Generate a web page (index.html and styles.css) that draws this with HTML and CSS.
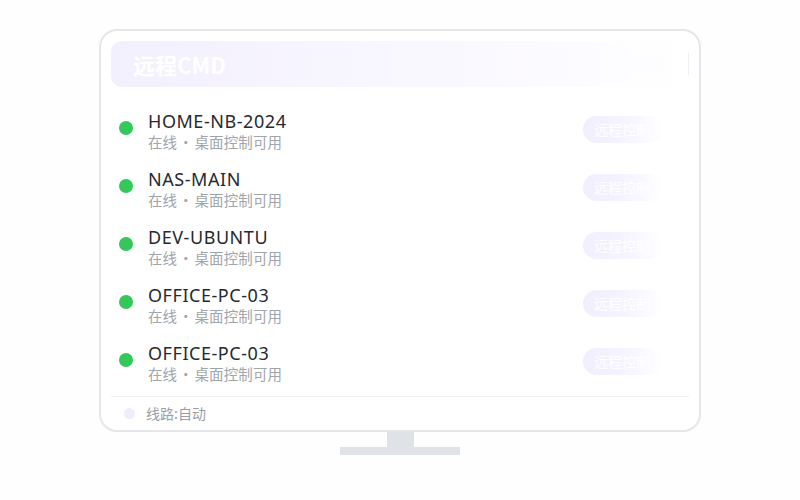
FILE: index.html
```html
<!DOCTYPE html>
<html lang="zh">
<head>
<meta charset="utf-8">
<link rel="stylesheet" href="styles.css">
</head>
<body>
<div class="stage">
  <div class="monitor">
    <div class="screen">
      <div class="header">
        <span class="title">远程CMD</span>
        <span class="hdr-right">CMD</span>
        <span class="hdr-line"></span>
      </div>
      <div class="list">
        <div class="row">
          <span class="dot"></span>
          <div class="info"><div class="name">HOME-NB-2024</div><div class="sub">在线 · 桌面控制可用</div></div>
          <span class="btn">远程控制</span>
        </div>
        <div class="row">
          <span class="dot"></span>
          <div class="info"><div class="name">NAS-MAIN</div><div class="sub">在线 · 桌面控制可用</div></div>
          <span class="btn">远程控制</span>
        </div>
        <div class="row">
          <span class="dot"></span>
          <div class="info"><div class="name">DEV-UBUNTU</div><div class="sub">在线 · 桌面控制可用</div></div>
          <span class="btn">远程控制</span>
        </div>
        <div class="row">
          <span class="dot"></span>
          <div class="info"><div class="name">OFFICE-PC-03</div><div class="sub">在线 · 桌面控制可用</div></div>
          <span class="btn">远程控制</span>
        </div>
        <div class="row">
          <span class="dot"></span>
          <div class="info"><div class="name">OFFICE-PC-03</div><div class="sub">在线 · 桌面控制可用</div></div>
          <span class="btn">远程控制</span>
        </div>
      </div>
      <div class="footer">
        <span class="fdot"></span>
        <span class="ftext">线路:自动</span>
      </div>
    </div>
    <div class="neck"></div>
    <div class="base"></div>
  </div>
</div>
</body>
</html>
```
FILE: styles.css
```css
html, body {
  margin: 0;
  padding: 0;
  background: #fefefe;
}
body {
  width: 800px;
  height: 500px;
  overflow: hidden;
  font-family: "Noto Sans", "Noto Sans CJK SC", sans-serif;
}
.stage {
  padding-top: 29px;
  display: flex;
  justify-content: center;
}
.monitor {
  display: flex;
  flex-direction: column;
  align-items: center;
  width: 602px;
}
.screen {
  box-sizing: border-box;
  width: 602px;
  height: 403px;
  border: 2px solid #e4e6ea;
  border-radius: 18px;
  background: #ffffff;
  padding: 10px 10px 0 10px;
  display: flex;
  flex-direction: column;
}
.header {
  height: 46px;
  border-radius: 11px;
  background: linear-gradient(to right, #f3f0fe 0%, #f8f6ff 45%, #fcfbff 80%, #ffffff 100%);
  display: flex;
  align-items: center;
  padding-left: 22px;
}
.title {
  color: #ffffff;
  font-family: "Noto Sans CJK SC", sans-serif;
  font-weight: 700;
  font-size: 22px;
  margin-top: -1px;
}
.hdr-right {
  margin-left: auto;
  margin-right: 24px;
  color: #fdfdff;
  font-weight: 700;
  font-size: 16px;
}
.hdr-line {
  width: 1px;
  height: 22px;
  background: #f0f0f4;
}
.list {
  padding-top: 23px;
  display: flex;
  flex-direction: column;
  gap: 16px;
}
.row {
  display: flex;
  align-items: flex-start;
  padding-left: 8px;
  height: 42px;
}
.dot {
  width: 14px;
  height: 14px;
  border-radius: 50%;
  background: #34c759;
  margin-top: 11px;
  flex-shrink: 0;
}
.info {
  margin-left: 15px;
  display: flex;
  flex-direction: column;
}
.name {
  font-family: "Noto Sans", "Noto Sans CJK SC", sans-serif;
  font-size: 18px;
  line-height: 22px;
  letter-spacing: 0.55px;
  color: #262a30;
}
.sub {
  font-family: "Noto Sans CJK SC", sans-serif;
  font-size: 14.5px;
  line-height: 20px;
  color: #a0a4ab;
  letter-spacing: 0.1px;
  word-spacing: -2px;
}
.btn {
  margin-left: auto;
  margin-right: 26px;
  margin-top: 6px;
  width: 80px;
  height: 27px;
  box-sizing: border-box;
  border-radius: 14px;
  background: linear-gradient(to right, #f1eefe 0%, #f5f3ff 50%, #ffffff 100%);
  color: #ffffff;
  font-family: "Noto Sans CJK SC", sans-serif;
  font-size: 14px;
  line-height: 27px;
  padding-left: 11px;
  white-space: nowrap;
  overflow: hidden;
}
.footer {
  margin-top: 12px;
  border-top: 1px solid #eef0f3;
  height: 32px;
  display: flex;
  align-items: center;
  padding-left: 13px;
}
.fdot {
  width: 11px;
  height: 11px;
  border-radius: 50%;
  background: #efedfc;
}
.ftext {
  margin-left: 11px;
  font-family: "Noto Sans CJK SC", sans-serif;
  font-size: 14px;
  color: #9a9ea6;
}
.neck {
  width: 27px;
  height: 15px;
  background: #dfe3e7;
}
.base {
  width: 120px;
  height: 8px;
  background: #e0e3e7;
}
```
